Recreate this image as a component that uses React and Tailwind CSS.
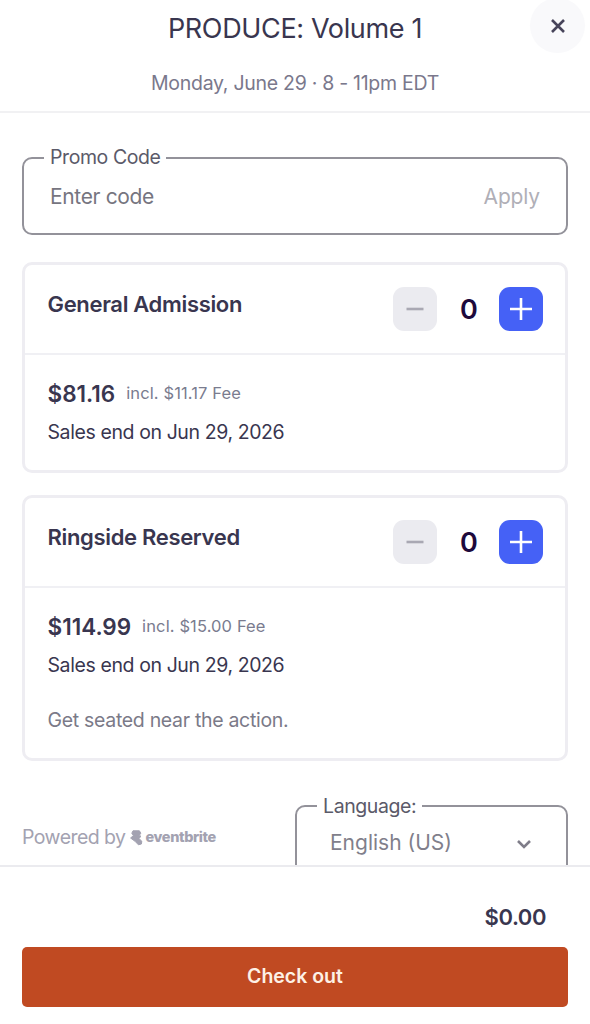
import React, { useState } from 'react';

const tickets = [
  {
    name: 'General Admission',
    price: '$81.16',
    fee: 'incl. $11.17 Fee',
    salesEnd: 'Sales end on Jun 29, 2026',
  },
  {
    name: 'Ringside Reserved',
    price: '$114.99',
    fee: 'incl. $15.00 Fee',
    salesEnd: 'Sales end on Jun 29, 2026',
    description: 'Get seated near the action.',
  },
];

function Stepper({ value, onChange }) {
  return (
    <div className="flex items-center">
      <button
        onClick={() => onChange(Math.max(0, value - 1))}
        className="flex h-11 w-11 items-center justify-center rounded-[11px] bg-[#ebebf0]"
      >
        <svg width="18" height="4" viewBox="0 0 18 4">
          <path d="M0.5 2h17" stroke="#a9a8b3" strokeWidth="2.6" />
        </svg>
      </button>
      <span className="h-11 w-[62px] pt-px pl-px text-center text-[27px] leading-[44px] font-semibold text-[#1e0a3c]">
        {value}
      </span>
      <button
        onClick={() => onChange(value + 1)}
        className="flex h-11 w-11 items-center justify-center rounded-[11px] bg-[#4561f6]"
      >
        <svg width="24" height="24" viewBox="0 0 24 24">
          <path d="M1 12h22M12 1v22" stroke="#fff" strokeWidth="2.6" />
        </svg>
      </button>
    </div>
  );
}

function TicketCard({ ticket }) {
  const [count, setCount] = useState(0);

  return (
    <section className="rounded-[10px] border-3 border-[#eeedf2] text-[#39364f]">
      <div className="flex h-[90px] items-start justify-between border-b-2 border-[#f0f0f4] pt-[22px] pr-[21.6px] pl-[22.5px]">
        <h2 className="pt-[2px] text-[22px] leading-[30px] font-semibold tracking-[-0.33px]">{ticket.name}</h2>
        <Stepper value={count} onChange={setCount} />
      </div>
      <div className="px-[22.5px] pt-[22px] pb-6">
        <div className="flex items-start gap-[11px]">
          <span className="text-[22.5px] leading-[34px] font-semibold">{ticket.price}</span>
          <span className="text-[16.5px] leading-[32px] tracking-[0.12px] text-[#7a7c8f]">{ticket.fee}</span>
        </div>
        <p className="pt-[7px] text-[19.5px] leading-[28px] tracking-[-0.4px]">{ticket.salesEnd}</p>
        {ticket.description && (
          <p className="pt-[27px] text-[19.5px] leading-[28px] tracking-[-0.31px] text-[#7b7a88]">
            {ticket.description}
          </p>
        )}
      </div>
    </section>
  );
}

export default function App() {
  return (
    <div className="flex h-[1024px] w-[590px] flex-col overflow-hidden bg-white font-['Inter',sans-serif]">
      {/* Header */}
      <header className="relative h-[113px] shrink-0 border-b-2 border-[#f1f1f3] text-center">
        <h1 className="pt-[11px] text-[27px] leading-[36px] tracking-[-0.35px] text-[#39364f]">PRODUCE: Volume 1</h1>
        <p className="pt-[22px] text-[19.5px] leading-[28px] tracking-[-0.28px] text-[#7a788c]">
          Monday, June 29 · 8 - 11pm EDT
        </p>
        <button className="absolute -top-[2px] right-[5px] flex h-[55px] w-[55px] items-center justify-center rounded-full bg-[#f9f9fb]">
          <svg width="16" height="16" viewBox="0 0 16 16">
            <path d="M2 2l12 12M14 2L2 14" stroke="#47445a" strokeWidth="2.6" />
          </svg>
        </button>
      </header>

      {/* Tickets */}
      <main className="min-h-0 flex-1 overflow-hidden px-[22px] pt-[34px]">
        <fieldset className="h-[88px] rounded-[10px] border-2 border-[#93929a] pl-5">
          <legend className="px-[6px] text-[19.5px] leading-[21px] tracking-[-0.42px] text-[#5b5a69]">Promo Code</legend>
          <div className="flex items-center justify-between pt-[14px] pr-[26px] pl-[6px] text-[21px] leading-[30px] tracking-[-0.35px]">
            <span className="text-[#76757f]">Enter code</span>
            <button className="tracking-[-0.15px] text-[#b0afb7]">Apply</button>
          </div>
        </fieldset>

        <div className="flex flex-col gap-[22px] pt-[27px]">
          {tickets.map((ticket) => (
            <TicketCard key={ticket.name} ticket={ticket} />
          ))}
        </div>

        <div className="flex items-start justify-between pt-[35px]">
          <div className="flex items-center pt-[26px] text-[#a3a2b1]">
            <span className="text-[19.5px] leading-[30px] tracking-[-0.55px]">Powered by</span>
            <svg className="mt-[2px] ml-[4px]" width="13" height="16" viewBox="0 0 13 16">
              <path
                d="M3 0.8h6.4l1.4 2.4-1.4 2 1.6 1.2-2.2 2 3 2.8-.4 2.8-3 .8-3-3.2L.6 8 3.4 5.6 1.8 3.2z"
                fill="currentColor"
                stroke="currentColor"
                strokeLinejoin="round"
              />
            </svg>
            <span className="ml-[3px] text-[14.5px] leading-[30px] font-extrabold tracking-[-0.4px]">eventbrite</span>
          </div>
          <fieldset className="h-[88px] w-[273px] rounded-[10px] border-2 border-[#93929a] pl-5">
            <legend className="px-[6px] text-[19.5px] leading-5 tracking-[-0.4px] text-[#5b5a69]">Language:</legend>
            <div className="flex items-center justify-between pt-[12px] pr-[34px] pl-[13px] text-[21px] leading-[30px] text-[#817f8b]">
              <span>English (US)</span>
              <svg className="mt-[2px]" width="16" height="12" viewBox="0 0 16 12">
                <path d="M2 3l6 6 6-6" fill="none" stroke="#7f7d89" strokeWidth="2.6" />
              </svg>
            </div>
          </fieldset>
        </div>
      </main>

      {/* Checkout bar */}
      <footer className="h-[159px] shrink-0 border-t-2 border-[#ebebef] px-[22px]">
        <p className="pt-[34px] pr-[22px] text-right text-[22px] leading-[32px] font-semibold tracking-[-0.45px] text-[#39364f]">
          $0.00
        </p>
        <button className="mt-[14px] h-[60px] w-full rounded-[5px] bg-[#c04a22] text-[19.5px] font-semibold text-[#fdf1e6]">
          Check out
        </button>
      </footer>
    </div>
  );
}
